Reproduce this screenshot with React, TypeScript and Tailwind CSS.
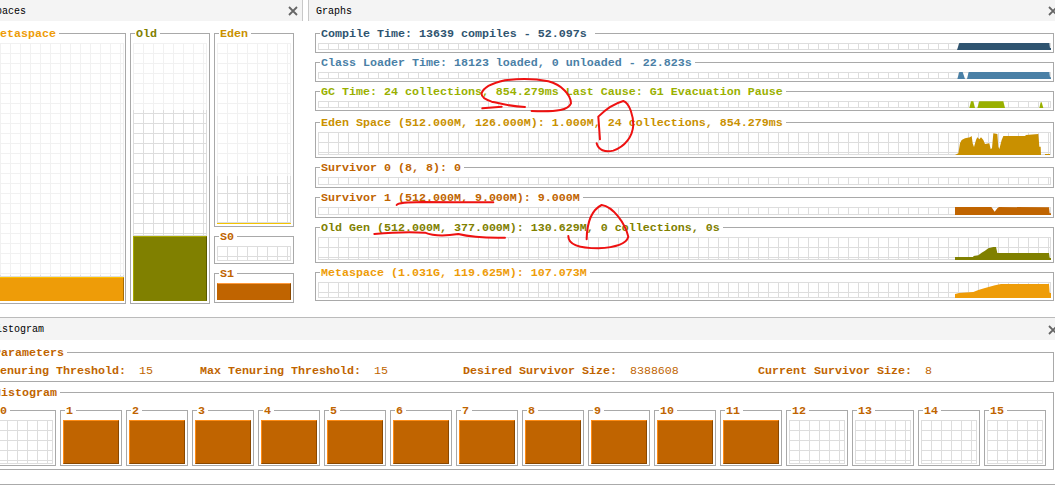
import type { ReactNode } from "react";

const FONT = "font-['Liberation_Mono',monospace]";

// Titled group box, like a swing TitledBorder
function TitledBox({
  title,
  color,
  className,
  titlePad = "pr-[3px]",
  children,
}: {
  title: string;
  color: string;
  className: string;
  titlePad?: string;
  children?: ReactNode;
}) {
  return (
    <div className={`relative border border-[#a9a9a9] ${className}`}>
      <span
        className={`absolute -top-[6px] left-[4px] bg-white pl-[1px] ${titlePad} text-[11.67px] leading-[13px] font-bold whitespace-pre`}
        style={{ color }}
      >
        {title}
      </span>
      {children}
    </div>
  );
}

function Grid({ className, fade = 0, faded = false }: { className: string; fade?: number; faded?: boolean }) {
  return (
    <div
      className={`relative border-r border-b border-[#dddddd] bg-[linear-gradient(#dddddd_1px,transparent_1px),linear-gradient(90deg,#dddddd_1px,transparent_1px)] bg-[size:10px_10px] ${className}`}
    >
      {(fade > 0 || faded) && (
        <div
          className="absolute -top-px -left-px -right-px bg-white/60 h-full"
          style={fade > 0 ? { height: fade } : undefined}
        />
      )}
    </div>
  );
}

function Bar({ className }: { className: string }) {
  return <div className={`border ${className}`} />;
}

function Chart({
  y,
  h,
  crop,
  color,
  polys,
}: {
  y: number;
  h: number;
  crop: number;
  color: string;
  polys: string[];
}) {
  // points are in 3x coords of a crop starting at (900, crop)
  const vb = `${(318 - 900) * 3} ${(y - crop) * 3} ${733 * 3} ${h * 3}`;
  return (
    <svg className="absolute top-0 left-0 overflow-visible" width={733} height={h} viewBox={vb}>
      {polys.map((p) => (
        <polygon key={p} points={p} fill={color} />
      ))}
    </svg>
  );
}

type GraphRow = {
  title: string;
  color: string;
  box: string;
  plot: string;
  y: number;
  h: number;
  crop: number;
  pad?: string;
  polys: string[];
};

const graphs: GraphRow[] = [
  {
    title: "Compile Time: 13639 compiles - 52.097s",
    color: "#2f5470",
    box: "h-[20px]",
    plot: "h-[7px]",
    y: 43,
    h: 7,
    crop: 0,
    pad: "pr-[8px]",
    polys: ["171,150 178,129 448,129 450,144 453,144 453,150"],
  },
  {
    title: "Class Loader Time: 18123 loaded, 0 unloaded - 22.823s",
    color: "#4a80a6",
    box: "h-[20px] mt-[9px]",
    plot: "h-[7px]",
    y: 72,
    h: 7,
    crop: 0,
    polys: ["172,237 178,216 188,216 195,237", "201,237 206,216 448,216 450,232 453,232 453,237"],
  },
  {
    title: "GC Time: 24 collections, 854.279ms Last Cause: G1 Evacuation Pause",
    color: "#99b000",
    box: "h-[20px] mt-[9px]",
    plot: "h-[7px]",
    y: 101,
    h: 7,
    crop: 0,
    polys: [
      "208,324 213,304 220,304 225,324",
      "232,324 238,304 310,304 315,324",
      "418,324 422,307 425,307 430,324",
    ],
  },
  {
    title: "Eden Space (512.000M, 126.000M): 1.000M, 24 collections, 854.279ms",
    color: "#c99000",
    box: "h-[36px] mt-[11px]",
    plot: "h-[23px]",
    y: 132,
    h: 23,
    crop: 0,
    polys: [
      "165,465 175,460 180,430 185,420 195,415 210,412 215,408 218,430 222,441 228,420 232,412 238,418 243,412 250,420 255,432 268,430 272,447 276,445 280,400 292,402 295,440 298,447 305,420 310,408 375,408 378,405 415,402 418,440 422,440 423,465",
      "435,462 450,462 450,465 435,465",
    ],
  },
  {
    title: "Survivor 0 (8, 8): 0",
    color: "#c06400",
    box: "h-[21px] mt-[9px]",
    plot: "h-[8px]",
    y: 177,
    h: 8,
    crop: 160,
    polys: [],
  },
  {
    title: "Survivor 1 (512.000M, 9.000M): 9.000M",
    color: "#c06400",
    box: "h-[21px] mt-[9px]",
    plot: "h-[8px]",
    y: 207,
    h: 8,
    crop: 160,
    polys: ["165,165 165,141 274,141 284,155 292,145 297,141 447,142 449,160 453,160 453,165"],
  },
  {
    title: "Old Gen (512.000M, 377.000M): 130.629M, 0 collections, 0s",
    color: "#808000",
    box: "h-[36px] mt-[9px]",
    plot: "h-[23px]",
    y: 237,
    h: 23,
    crop: 160,
    polys: [
      "165,300 165,291 220,291 220,288 235,286 245,278 255,272 265,265 280,261 288,261 292,279 447,279 449,294 453,294 453,300",
    ],
  },
  {
    title: "Metaspace (1.031G, 119.625M): 107.073M",
    color: "#ee9c08",
    box: "h-[29px] mt-[9px]",
    plot: "h-[16px]",
    y: 282,
    h: 16,
    crop: 160,
    polys: [
      "165,414 165,402 177,399 220,396 235,390 255,384 285,376 303,372 447,372 449,399 453,399 453,414",
    ],
  },
];

const params = [
  { label: "Tenuring Threshold:", value: "15", cls: "w-[207px]" },
  { label: "Max Tenuring Threshold:", value: "15", cls: "w-[263px]" },
  { label: "Desired Survivor Size:", value: "8388608", cls: "w-[295px]" },
  { label: "Current Survivor Size:", value: "8", cls: "" },
];

function CloseIcon() {
  return (
    <svg width="10" height="10" viewBox="0 0 10 10" className="shrink-0">
      <path d="M1 1 9 9M9 1 1 9" stroke="#666666" strokeWidth="1.8" fill="none" />
    </svg>
  );
}

export default function App() {
  return (
    <div className={`relative w-[1055px] h-[486px] overflow-hidden bg-white ${FONT}`}>
      <div className="flex h-[317px]">
        {/* Spaces */}
        <div className="w-[323px] shrink-0 -ml-[20px]">
          <div className="h-[21px] flex items-center justify-between bg-[#f4f4f4] border-r border-[#c8c8c8] pl-[10px] pr-[4px] pt-[1px] text-[10px] text-black">
            <span>Spaces</span>
            <CloseIcon />
          </div>
          <div className="flex gap-[4px] pl-[7px] pt-[12px]">
            <TitledBox title="Metaspace" color="#ee9c08" className="w-[139px] h-[271px] pt-[9px] pl-[2px]">
              <div className="relative w-[134px] h-[258px]">
                <Grid faded className="h-[234px]" />
                <Bar className="h-[24px] bg-[#ee9c08] border-t-[#ffc000] border-l-[#ee9c08] border-b-[#ee9c08] border-r-[#a86c00]" />
              </div>
            </TitledBox>
            <TitledBox title="Old" color="#808000" className="w-[80px] h-[271px] pt-[9px] pl-[2px]">
              <div className="relative w-[74px] h-[258px]">
                <Grid fade={68} className="h-[193px]" />
                <Bar className="h-[65px] bg-[#808000] border-t-[#a8a800] border-l-[#a8a800] border-b-[#808000] border-r-[#585800]" />
              </div>
            </TitledBox>
            <div className="w-[80px] flex flex-col">
              <TitledBox title="Eden" color="#c99000" className="h-[194px] pt-[9px] pl-[2px]">
                <Grid fade={134} className="w-[74px] h-[180px]" />
                <div className="w-[74px] h-px bg-[#f5c400]" />
              </TitledBox>
              <TitledBox title="S0" color="#c06400" className="h-[28px] mt-[9px] pt-[9px] pl-[2px]">
                <Grid className="w-[74px] h-[15px]" />
              </TitledBox>
              <TitledBox title="S1" color="#c06400" className="h-[30px] mt-[9px] pt-[9px] pl-[2px]">
                <Bar className="w-[74px] h-[17px] bg-[#c06400] border-t-[#ff9a3c] border-l-[#c06400] border-b-[#c06400] border-r-[#8a4800]" />
              </TitledBox>
            </div>
          </div>
        </div>

        {/* Graphs */}
        <div className="w-[6px] shrink-0 -ml-[1px]" />
        <div className="flex-1 min-w-0">
          <div className="h-[21px] flex items-center justify-between bg-[#f4f4f4] border-l border-[#c8c8c8] pl-[7px] pt-[1px] text-[10px] text-black">
            <span>Graphs</span>
            <span className="-mr-[3px] flex"><CloseIcon /></span>
          </div>
          <div className="pt-[12px] pl-[7px] pr-[1px] flex flex-col">
            {graphs.map((g) => (
              <TitledBox
                key={g.title}
                title={g.title}
                color={g.color}
                titlePad={g.pad ?? "pr-[3px]"}
                className={`${g.box} pt-[9px] px-[2px]`}
              >
                <div className="relative">
                  <Grid className={g.plot} />
                  <Chart y={g.y} h={g.h} crop={g.crop} color={g.color} polys={g.polys} />
                </div>
              </TitledBox>
            ))}
          </div>
        </div>
      </div>

      {/* Histogram */}
      <div className="border-t border-[#bbbbbb] h-[168px]">
        <div className="h-[22px] flex items-center justify-between bg-[#f4f4f4] pt-[1px] text-[10px] text-black">
          <span className="-ml-[10px]">Histogram</span>
          <span className="-mr-[3px] flex"><CloseIcon /></span>
        </div>
        <div className="-ml-[12px] mr-[1px] pt-[12px]">
          <TitledBox title="Parameters" color="#c06400" className="h-[30px]">
            <div className="flex items-center h-full pl-[4px] pt-[9px] text-[11.67px] text-[#c06400]">
              {params.map((p) => (
                <div key={p.label} className={`flex whitespace-pre ${p.cls}`}>
                  <span className="font-bold">{p.label}</span>
                  <span className="ml-[13px]">{p.value}</span>
                </div>
              ))}
            </div>
          </TitledBox>
          <TitledBox title="Histogram" color="#c06400" className="h-[78px] mt-[10px] pt-[17px] pl-[5px]">
            <div className="flex gap-[4px]">
              {Array.from({ length: 16 }, (_, i) => (
                <TitledBox
                  key={i}
                  title={String(i)}
                  color="#c06400"
                  className="w-[62px] h-[56px] pt-[9px] px-[2px] shrink-0"
                >
                  {i >= 1 && i <= 11 ? (
                    <Bar className="w-[56px] h-[44px] bg-[#c06400] border-t-[#ff8c14] border-l-[#ff8c14] border-b-[#8a4800] border-r-[#8a4800]" />
                  ) : (
                    <Grid className="w-[56px] h-[44px]" />
                  )}
                </TitledBox>
              ))}
            </div>
          </TitledBox>
        </div>
      </div>
      <div className="h-px bg-[#aaaaaa] -mt-px" />

      {/* pen marks drawn on the screenshot */}
      <svg className="absolute inset-0 pointer-events-none" width="1055" height="486" fill="none" stroke="#ee1111" strokeLinecap="round" strokeLinejoin="round" strokeWidth="2">
        <g transform="translate(305 0) scale(0.3333)" strokeWidth="6">
          <path d="M660 321C620 320 590 312 560 305C540 298 528 290 530 280C535 262 560 250 600 241C640 236 690 236 730 244C770 254 798 285 798 310C790 330 760 336 680 333M532 325L590 320" />
          <path d="M885 418L880 350C900 330 930 310 955 303C975 310 985 350 985 375C983 410 960 440 925 452C900 458 880 450 875 430" />
        </g>
        <g transform="translate(305 160) scale(0.3333)" strokeWidth="6">
          <path d="M275 135C280 128 300 127 350 126L450 127L565 127" />
          <path d="M208 222C250 218 300 214 360 218C385 228 410 230 460 222C500 232 550 234 600 233" />
          <path d="M845 238C846 190 860 150 890 135C925 140 960 190 970 230C965 250 930 262 880 265C830 265 790 255 790 228" />
        </g>
      </svg>
    </div>
  );
}
